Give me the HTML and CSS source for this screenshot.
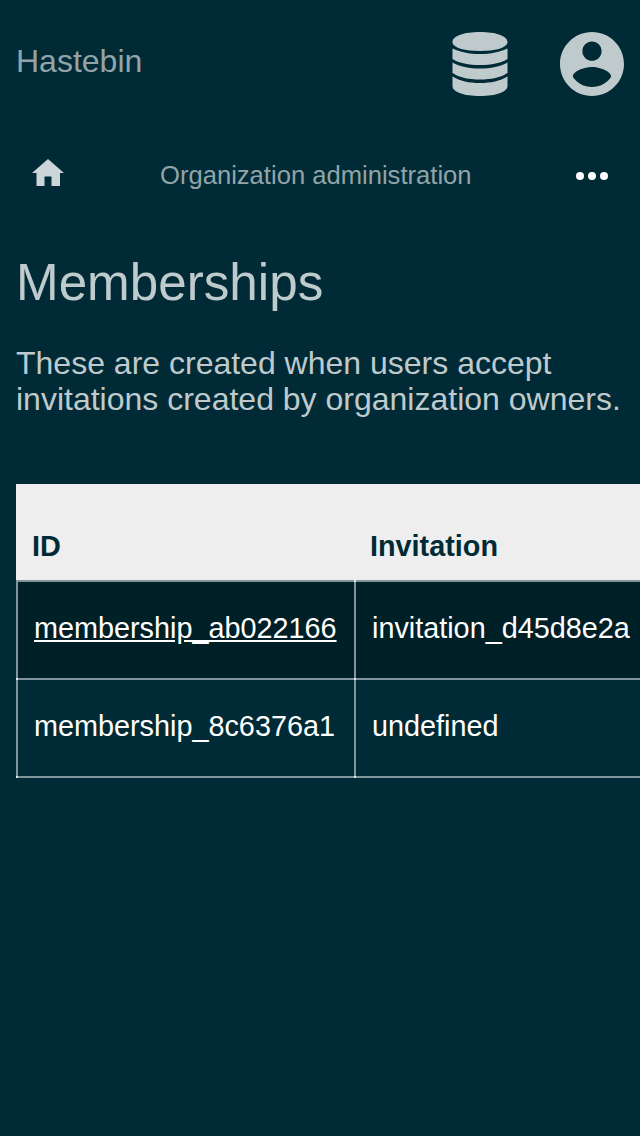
FILE: index.html
```html
<!DOCTYPE html>
<html lang="en">
<head>
<meta charset="utf-8">
<title>Memberships</title>
<link rel="stylesheet" href="styles.css">
</head>
<body>
<header class="topbar">
  <span class="brand">Hastebin</span>
  <div class="actions">
    <svg class="database" viewBox="0 0 56 64"><path d="M.5 10C.5 4 12 0 28 0s27.500 4 27.500 10v1C54 16 43 19 28 19S2 16 .5 11zM.5 16.500C8 20 17 22 28 22s20-2 27.500-5.500V27C49 31 39 33 28 33S7 31 .5 27zM.5 30.500C8 34.500 17 36.500 28 36.500s20-2 27.500-6V41C49 45.500 39 47.500 28 47.500S7 45.500 .5 41zM.5 44.500C8 49 17 51 28 51s20-2 27.500-6.500V54C55.500 60 44 64 28 64S.5 60 .5 54z"/></svg>
    <svg class="account" viewBox="2 2 20 20"><path d="M12 2C6.480 2 2 6.480 2 12s4.480 10 10 10 10-4.480 10-10S17.520 2 12 2zm0 3c1.660 0 3 1.340 3 3s-1.340 3-3 3-3-1.340-3-3 1.340-3 3-3zm0 14.200c-2.500 0-4.710-1.280-6-3.220.030-1.990 4-3.080 6-3.080 1.990 0 5.970 1.090 6 3.080-1.290 1.940-3.500 3.220-6 3.220z"/></svg>
  </div>
</header>
<nav class="crumbs">
  <svg class="home" viewBox="0 0 32 27"><path d="M16 0 32 14h-4v13h-8.500v-9.500h-7V27H4.500V14H0z"/></svg>
  <span class="section">Organization administration</span>
  <svg class="more" viewBox="0 0 32 8"><circle cx="4" cy="4" r="4"/><circle cx="16" cy="4" r="4"/><circle cx="28" cy="4" r="4"/></svg>
</nav>
<main>
  <h1>Memberships</h1>
  <p class="intro">These are created when users accept invitations created by organization owners.</p>
  <table class="members">
    <thead><tr><th class="id">ID</th><th>Invitation</th></tr></thead>
    <tbody>
      <tr class="selected"><td><a>membership_ab022166</a></td><td>invitation_d45d8e2a</td></tr>
      <tr class="last"><td>membership_8c6376a1</td><td>undefined</td></tr>
    </tbody>
  </table>
</main>
</body>
</html>
```
FILE: styles.css
```css
* { box-sizing: border-box; }
body { margin: 0; min-height: 1136px; background: #002b36; color: #bfcacd; font-family: "Liberation Sans", Arial, sans-serif; font-size: 32px; }
svg { display: block; fill: #bfcacd; }
.topbar { display: flex; justify-content: space-between; height: 128px; padding: 32px 16px; }
.brand { color: #92a4a9; line-height: 58px; }
.actions { display: flex; gap: 52px; }
.database { width: 56px; height: 64px; }
.account { width: 64px; height: 64px; }
.crumbs { display: grid; grid-template-columns: 128px 1fr 32px; align-items: center; height: 95px; padding: 0 32px; }
.home { width: 32px; height: 27px; margin-top: -7px; fill: #ccd5d7; }
.section { color: #92a4a9; font-size: 25.6px; }
.more { width: 32px; height: 8px; margin-top: 1px; fill: #fff; }
main { padding: 0 0 0 16px; }
h1 { margin: 31px 0 0; font-size: 51.2px; line-height: 58px; font-weight: 400; }
.intro { margin: 33px 16px 0 0; line-height: 36px; }
.members { width: 624px; margin-top: 67px; border-spacing: 0; table-layout: fixed; font-size: 28.8px; line-height: 32px; color: #fff; }
.members th { height: 96px; padding: 28px 0 0 16px; background: #eee; color: #002b36; text-align: left; }
.members .id { width: 338px; }
.members td { position: relative; height: 98px; padding: 0 0 4px 16px; border: 0 solid #80959b; border-width: 2px 0 0 2px; white-space: nowrap; }
.members .last td { height: 100px; border-bottom-width: 2px; }
.members a { text-decoration: underline; }
.selected { background: #002028; }
.selected td + td::before,
.last td::before,
.last td::after { content: ""; position: absolute; left: -2px; width: 2px; height: 2px; background: #dfe4e6; }
.selected td::before,
.last td::before { top: -2px; }
.last td::after { bottom: -2px; }
```
